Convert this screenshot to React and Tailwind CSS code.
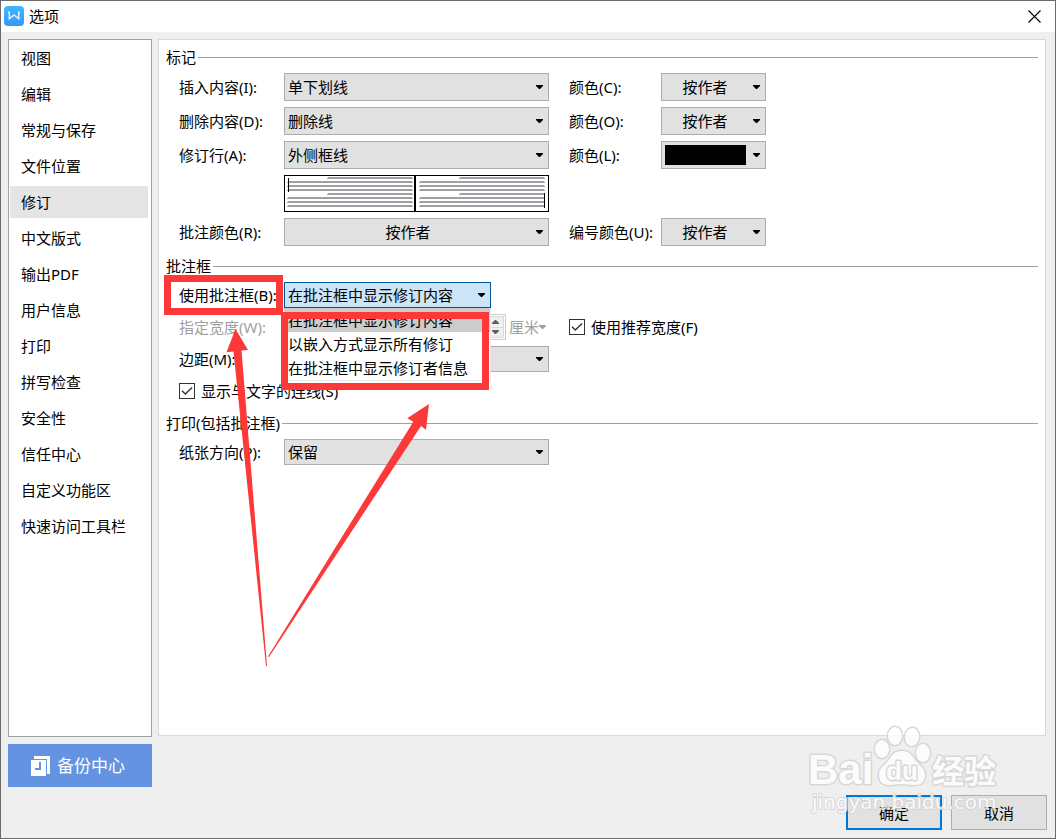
import React, { useState } from "react";
import clsx from "clsx";

const SECTIONS = [
  "视图",
  "编辑",
  "常规与保存",
  "文件位置",
  "修订",
  "中文版式",
  "输出PDF",
  "用户信息",
  "打印",
  "拼写检查",
  "安全性",
  "信任中心",
  "自定义功能区",
  "快速访问工具栏",
];

const BALLOON_MODES = [
  "在批注框中显示修订内容",
  "以嵌入方式显示所有修订",
  "在批注框中显示修订者信息",
];

const Caret = ({ className }) => (
  <svg
    className={clsx("pointer-events-none", className)}
    width="7"
    height="4"
    viewBox="0 0 7 4"
    fill="currentColor"
    aria-hidden="true"
  >
    <path d="M0 0h7v1L4 4H3L0 1z" />
  </svg>
);

const Logo = () => (
  <svg width="20" height="20" viewBox="0 0 20 20" aria-hidden="true">
    <defs>
      <linearGradient id="logo" x1="0" y1="0" x2="0" y2="1">
        <stop offset="0" stopColor="#3cb8fb" />
        <stop offset="1" stopColor="#3a95fb" />
      </linearGradient>
    </defs>
    <rect width="20" height="20" rx="4" fill="url(#logo)" />
    <path
      d="M4 6.2h1.3v6.6L10 9l4.7 3.8V6.2H16"
      fill="none"
      stroke="#fff"
      strokeWidth="1.5"
      opacity=".85"
    />
  </svg>
);

const TitleBar = () => (
  <header className="flex h-[31px] items-center bg-white pb-px pl-[3px] pr-[14px]">
    <Logo />
    <h1 className="ml-[5px] flex-1">选项</h1>
    <button type="button" aria-label="关闭">
      <svg width="13" height="13" viewBox="0 0 13 13" stroke="#000" strokeWidth="1.1">
        <path d="M.5 .5l12 12M12.5 .5l-12 12" />
      </svg>
    </button>
  </header>
);

const Sidebar = ({ active, onSelect }) => (
  <nav className="flex w-36 flex-col gap-1 border border-[#a0a0a0] bg-white pt-[2px] pr-[3px] pl-px">
    {SECTIONS.map((name) => (
      <button
        key={name}
        type="button"
        onClick={() => onSelect(name)}
        className={clsx(
          "h-8 pl-[11px] text-left",
          name === active && "bg-[#e5e5e5]"
        )}
      >
        {name}
      </button>
    ))}
  </nav>
);

const Group = ({ title, children }) => (
  <section className="flex flex-col gap-[6px]">
    <div className="flex h-5 items-center gap-[2px]">
      <h2>{title}</h2>
      <div className="h-px flex-1 bg-[#a0a0a0]" />
    </div>
    {children}
  </section>
);

const Row = ({ children }) => <div className="flex items-center pl-[13px]">{children}</div>;

const Select = ({ id, options, centered, open, className }) => (
  <div className={clsx("relative flex items-center", className)}>
    <select
      id={id}
      className={clsx(
        "h-full w-full appearance-none border pl-[3px] outline-none",
        centered && "pr-5 [text-align-last:center]",
        open ? "border-[#005499] bg-[#cce4f7]" : "border-[#adadad] bg-[#e1e1e1]"
      )}
    >
      {options.map((o) => (
        <option key={o}>{o}</option>
      ))}
    </select>
    <Caret className="absolute right-[6px]" />
    {open && (
      <ul
        role="listbox"
        className="absolute top-full left-0 z-10 w-full border-r border-b border-[#ececec] bg-white"
      >
        {options.map((o, i) => (
          <li
            key={o}
            role="option"
            aria-selected={i === 0}
            className={clsx("h-6 pl-1 leading-6 whitespace-nowrap", i === 0 && "bg-[#cccccc]")}
          >
            {o}
          </li>
        ))}
      </ul>
    )}
  </div>
);

const Field = ({ id, label, options, centered, className }) => (
  <>
    <label htmlFor={id} className="w-[105px]">
      {label}
    </label>
    <Select
      id={id}
      options={options}
      centered={centered}
      className={clsx("w-[265px]", className)}
    />
  </>
);

const ColorField = ({ id, label }) => (
  <>
    <label htmlFor={id} className="ml-5 w-[92px] whitespace-nowrap">
      {label}
    </label>
    <Select id={id} options={["按作者"]} centered className="h-7 w-[105px]" />
  </>
);

const Checkbox = ({ id, label, className }) => (
  <div className={clsx("flex items-center gap-[6px]", className)}>
    <div className="grid">
      <input
        id={id}
        type="checkbox"
        defaultChecked
        className="peer col-start-1 row-start-1 size-4 appearance-none border border-[#333333] bg-white"
      />
      <svg
        className="pointer-events-none invisible col-start-1 row-start-1 peer-checked:visible"
        width="16"
        height="16"
        viewBox="0 0 16 16"
        fill="none"
        stroke="#333"
        strokeWidth="1.4"
      >
        <path d="M3 7.8l3.3 3.3 6.8-6.6" />
      </svg>
    </div>
    <label htmlFor={id}>{label}</label>
  </div>
);

const FULL = [6, 10, 14, 22, 26, 30];
const SHORT = [2, 18];

// Two facing pages showing on which side the change bar goes
const PagePreview = () => (
  <svg className="ml-[105px]" width="265" height="37" viewBox="0 0 265 37" shapeRendering="crispEdges">
    <rect x=".5" y=".5" width="264" height="36" fill="#fff" stroke="#000" />
    <rect x="130" width="2" height="37" />
    {[0, 132].map((dx) => (
      <g key={dx} fill="#a0a0a4">
        {FULL.map((y) => (
          <path key={y} d={`M${dx + 4} ${y}h124v1h1v1h-126v-1h1z`} />
        ))}
        {SHORT.map((y) => (
          <path key={y} d={`M${dx + 44} ${y}h84v1h1v1h-86v-1h1z`} />
        ))}
      </g>
    ))}
    <rect x="4" y="3" width="1" height="14" />
    <rect x="260" y="18" width="1" height="15" />
  </svg>
);

const WidthSpinner = () => (
  <div className="flex h-[26px] w-[222px] border border-[#cccccc] bg-white p-px">
    <input id="width" disabled className="min-w-0 flex-1 bg-[#f0f0f0]" />
    <div className="flex w-[17px] flex-col border border-[#d9d9d9] bg-[#f0f0f0] text-[#606060]">
      <button type="button" disabled aria-label="增加" className="flex flex-1 items-center justify-center border-b border-[#d9d9d9]">
        <Caret className="rotate-180" />
      </button>
      <button type="button" disabled aria-label="减少" className="flex flex-1 items-center justify-center">
        <Caret />
      </button>
    </div>
  </div>
);

const TrackChanges = () => (
  <main className="mb-px flex min-w-0 flex-1 flex-col gap-[10px] border border-[#d9d9d9] bg-white p-[7px]">
    <Group title="标记">
      <Row>
        <Field id="insert" label="插入内容(I):" options={["单下划线"]} className="h-7" />
        <ColorField id="insert-color" label="颜色(C):" />
      </Row>
      <Row>
        <Field id="delete" label="删除内容(D):" options={["删除线"]} className="h-7" />
        <ColorField id="delete-color" label="颜色(O):" />
      </Row>
      <Row>
        <Field id="lines" label="修订行(A):" options={["外侧框线"]} className="h-7" />
        <label htmlFor="line-color" className="ml-5 w-[92px]">
          颜色(L):
        </label>
        <button
          id="line-color"
          type="button"
          className="flex h-7 w-[105px] items-center justify-between border border-[#adadad] bg-[#e1e1e1] pr-[5px] pl-[3px]"
        >
          <span className="h-5 w-[81px] bg-black" />
          <Caret />
        </button>
      </Row>
      <Row>
        <PagePreview />
      </Row>
      <Row>
        <Field id="comment" label="批注颜色(R):" options={["按作者"]} centered className="h-7" />
        <ColorField id="number-color" label="编号颜色(U):" />
      </Row>
    </Group>

    <Group title="批注框">
      <Row>
        <label htmlFor="balloon" className="w-[105px]">
          使用批注框(B):
        </label>
        <Select id="balloon" options={BALLOON_MODES} open className="h-[26px] w-[207px]" />
      </Row>
      <Row>
        <label htmlFor="width" className="w-[105px] text-[#a0a0a0]">
          指定宽度(W):
        </label>
        <WidthSpinner />
        <button type="button" disabled className="ml-[3px] flex w-[60px] items-center text-[#a0a0a0]">
          厘米
          <Caret />
        </button>
        <Checkbox id="recommended" label="使用推荐宽度(F)" />
      </Row>
      <Row>
        <Field id="margin" label="边距(M):" options={[""]} className="h-[26px]" />
      </Row>
      <Row>
        <Checkbox id="connect" label="显示与文字的连线(S)" className="h-[25px]" />
      </Row>
    </Group>

    <Group title="打印(包括批注框)">
      <Row>
        <Field id="paper" label="纸张方向(P):" options={["保留"]} className="h-[26px]" />
      </Row>
    </Group>
  </main>
);

const Footer = () => (
  <footer className="flex h-[86px] justify-between pr-px">
    <button
      type="button"
      className="flex h-[43px] w-36 items-center justify-center gap-[7px] self-start bg-[#6493e1] pr-1 text-[17px] text-white"
    >
      <svg width="19" height="20" viewBox="0 0 19 20" fill="#fff" aria-hidden="true">
        <path d="M3 0h16v18h-3V3H3z" />
        <path d="M0 4h15v16H0z" />
        <path d="M9 6v7H4" fill="none" stroke="#6493e1" strokeWidth="2" />
      </svg>
      备份中心
    </button>
    <div className="flex gap-[9px] self-end">
      <button type="button" className="h-[35px] w-24 border-2 border-[#0078d7] bg-[#e1e1e1]">
        确定
      </button>
      <button type="button" className="h-[35px] w-24 border border-[#adadad] bg-[#e1e1e1]">
        取消
      </button>
    </div>
  </footer>
);

// Red boxes and arrows drawn over the dialog
const Annotations = () => (
  <svg
    className="pointer-events-none absolute -top-px -left-px z-20"
    width="500"
    height="680"
    viewBox="0 0 500 680"
    fill="#fd3838"
    aria-hidden="true"
  >
    <g fill="none" stroke="#fd3838" strokeWidth="7">
      <rect x="167.5" y="278.5" width="112" height="33" />
      <rect x="284.5" y="315.5" width="201" height="71" />
    </g>
    <path d="M235.5 329L248 350l-6.5 .6L267 666h-1L233.5 351.5l-7 .8z" />
    <path d="M429 404l-3 25.7-5-3.7L269 657l-1-.6L413.3 421.7l-6-3.4z" />
  </svg>
);

const Watermark = () => (
  <svg
    className="pointer-events-none absolute right-[50px] bottom-[14px] z-20"
    width="200"
    height="104"
    viewBox="0 0 200 104"
    fill="#fff"
    stroke="#d2d2d2"
    strokeWidth="3"
    strokeLinejoin="round"
    opacity=".8"
    paintOrder="stroke"
  >
    <text x="3" y="64" fontSize="42" fontWeight="700" className="font-['Liberation_Sans',sans-serif]">
      Bai
    </text>
    <ellipse cx="77" cy="29" rx="7" ry="9" />
    <ellipse cx="90" cy="16" rx="7" ry="9" />
    <ellipse cx="107" cy="17" rx="7" ry="9" transform="rotate(8 107 17)" />
    <ellipse cx="118" cy="33" rx="7" ry="9" />
    <path d="M97 31c8 0 10 5 14 10 5 6 9 8 9 14 0 9-6 10-12 10-4 0-7-1-11-1s-8 1-12 1c-6 0-11-2-11-10 0-7 5-9 9-14 4-6 6-10 14-10z" />
    <text x="81" y="60" fontSize="26" fontWeight="700" className="font-['Liberation_Sans',sans-serif]">
      du
    </text>
    <text x="127" y="63" fontSize="32" fontWeight="700" className="font-['Noto_Sans_CJK_SC',sans-serif]">
      经验
    </text>
    <text x="7" y="89" fontSize="20" strokeWidth="2" className="font-['DejaVu_Sans',sans-serif]">
      jingyan.baidu.com
    </text>
  </svg>
);

export default function App() {
  const [section, setSection] = useState("修订");

  return (
    <div className="relative flex min-h-screen flex-col border border-[#6b6b6b] bg-[#efefef] font-['Noto_Sans','Noto_Sans_CJK_SC',sans-serif] text-[15px] leading-5 text-black">
      <TitleBar />
      <div className="flex flex-1 flex-col gap-[7px] p-[7px] pb-2">
        <div className="flex flex-1 gap-[6px] pr-[2px]">
          <Sidebar active={section} onSelect={setSection} />
          <TrackChanges />
        </div>
        <Footer />
      </div>
      <Annotations />
      <Watermark />
    </div>
  );
}
